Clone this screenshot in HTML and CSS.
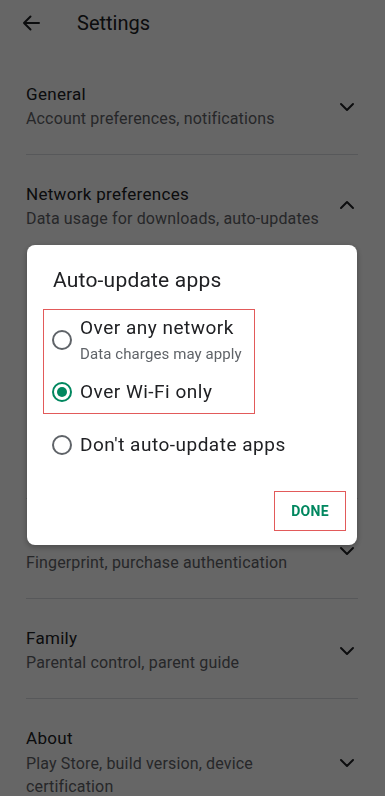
FILE: index.html
```html
<!DOCTYPE html>
<html lang="en">
<head>
<meta charset="utf-8">
<title>Settings</title>
<link rel="stylesheet" href="styles.css">
</head>
<body>
<div class="page">
  <header class="topbar">
    <svg class="back" width="20" height="20" viewBox="0 0 20 20"><path d="M18 10H3M9.5 3.5L3 10l6.5 6.5" fill="none" stroke="#202124" stroke-width="2" stroke-linecap="round" stroke-linejoin="round"/></svg>
    <h1 class="title">Settings</h1>
  </header>
  <div class="rows">
    <div class="row">
      <div class="text"><div class="rt">General</div><div class="rs">Account preferences, notifications</div></div>
      <svg class="chev" width="16" height="10" viewBox="0 0 16 10"><path d="M2 2l6 6 6-6" fill="none" stroke="#202124" stroke-width="2" stroke-linecap="round" stroke-linejoin="round"/></svg>
    </div>
    <div class="row expanded">
      <div class="head">
        <div class="text"><div class="rt">Network preferences</div><div class="rs">Data usage for downloads, auto-updates</div></div>
        <svg class="chev up" width="16" height="10" viewBox="0 0 16 10"><path d="M2 8l6-6 6 6" fill="none" stroke="#202124" stroke-width="2" stroke-linecap="round" stroke-linejoin="round"/></svg>
      </div>
      <div class="sub"><div class="rt">App download preference</div><div class="rs">Over any network</div></div>
      <div class="sub"><div class="rt">Auto-update apps</div><div class="rs">Over Wi-Fi only</div></div>
      <div class="sub"><div class="rt">Auto-play videos</div><div class="rs">Over Wi-Fi only</div></div>
    </div>
    <div class="row">
      <div class="text"><div class="rt covered">Authentication</div><div class="rs">Fingerprint, purchase authentication</div></div>
      <svg class="chev" width="16" height="10" viewBox="0 0 16 10"><path d="M2 2l6 6 6-6" fill="none" stroke="#202124" stroke-width="2" stroke-linecap="round" stroke-linejoin="round"/></svg>
    </div>
    <div class="row">
      <div class="text"><div class="rt">Family</div><div class="rs">Parental control, parent guide</div></div>
      <svg class="chev" width="16" height="10" viewBox="0 0 16 10"><path d="M2 2l6 6 6-6" fill="none" stroke="#202124" stroke-width="2" stroke-linecap="round" stroke-linejoin="round"/></svg>
    </div>
    <div class="row last">
      <div class="text"><div class="rt">About</div><div class="rs two">Play Store, build version, device certification</div></div>
      <svg class="chev" width="16" height="10" viewBox="0 0 16 10"><path d="M2 2l6 6 6-6" fill="none" stroke="#202124" stroke-width="2" stroke-linecap="round" stroke-linejoin="round"/></svg>
    </div>
  </div>
</div>
<div class="scrim"></div>
<div class="dialog">
  <div class="dtitle">Auto-update apps</div>
  <div class="hl">
    <div class="opt first">
      <span class="radio"></span>
      <div class="otext"><div class="ot">Over any network</div><div class="os">Data charges may apply</div></div>
    </div>
    <div class="opt second">
      <span class="radio on"></span>
      <div class="otext"><div class="ot">Over Wi-Fi only</div></div>
    </div>
  </div>
  <div class="opt third">
    <span class="radio"></span>
    <div class="otext"><div class="ot">Don't auto-update apps</div></div>
  </div>
  <div class="actions"><span class="done">DONE</span></div>
</div>
</body>
</html>
```
FILE: styles.css
```css
html, body {
  margin: 0;
  padding: 0;
  background: #ffffff;
  font-family: Roboto, "Noto Sans", Arial, sans-serif;
  color: #202124;
}
.page {
  width: 385px;
  height: 796px;
  overflow: hidden;
}
.topbar {
  height: 46px;
  display: flex;
  align-items: center;
  padding-left: 21px;
  margin-bottom: 9px;
}
.back { display: block; }
.title {
  margin: 0 0 0 36px;
  font-size: 20px;
  font-weight: 400;
  color: #202124;
  line-height: 28px;
}
.rows {
  margin: 0 27px 0 26px;
}
.row {
  display: flex;
  align-items: center;
  justify-content: space-between;
  padding: 28px 0 24px;
  border-bottom: 1px solid #dadce0;
}
.row.expanded {
  display: block;
  padding-bottom: 0;
  height: 315px;
}
.row.expanded .head {
  display: flex;
  align-items: center;
  justify-content: space-between;
}
.sub {
  padding: 20px 0 0;
  visibility: hidden;
}
.row.last { border-bottom: none; }
.rt {
  font-size: 17px;
  line-height: 22px;
  letter-spacing: 0.3px;
  color: #202124;
}
.rt.covered { visibility: hidden; }
.rs {
  margin-top: 3px;
  font-size: 16px;
  line-height: 22px;
  letter-spacing: 0.15px;
  color: #5f6368;
}
.rs.two { width: 290px; line-height: 23px; }
.chev {
  display: block;
  margin-right: 3px;
  flex-shrink: 0;
}
.chev.up { margin-top: -4px; }
.scrim {
  position: fixed;
  inset: 0;
  background: rgba(0, 0, 0, 0.6);
}
.dialog {
  position: fixed;
  left: 27px;
  top: 245px;
  width: 330px;
  height: 300px;
  box-sizing: border-box;
  background: #ffffff;
  border-radius: 8px;
  box-shadow: 0 2px 6px rgba(0,0,0,0.3);
  padding: 21px 0 0;
}
.dtitle {
  font-size: 21px;
  line-height: 28px;
  letter-spacing: 0.2px;
  padding-left: 26px;
  color: #202124;
  font-weight: 400;
}
.hl {
  margin: 15px 0 0 16px;
  width: 212px;
  height: 105px;
  box-sizing: border-box;
  border: 1px solid #e25a5a;
  padding: 6px 0 0 8px;
}
.opt {
  display: flex;
  align-items: center;
}
.opt.second { margin-top: 16px; }
.opt.third { margin: 19px 0 0 25px; }
.radio {
  width: 20px;
  height: 20px;
  box-sizing: border-box;
  border: 2px solid #5f6368;
  border-radius: 50%;
  flex-shrink: 0;
  margin-right: 8px;
  display: flex;
  align-items: center;
  justify-content: center;
}
.radio.on { border-color: #01875f; }
.radio.on::after {
  content: "";
  width: 10px;
  height: 10px;
  border-radius: 50%;
  background: #01875f;
}
.ot {
  font-size: 19px;
  line-height: 24px;
  letter-spacing: 0.5px;
  color: #202124;
}
.os {
  margin-top: 4px;
  font-size: 15px;
  line-height: 20px;
  letter-spacing: 0.1px;
  color: #5f6368;
}
.actions {
  display: flex;
  justify-content: flex-end;
  margin: 34px 11px 0 0;
}
.done {
  width: 72px;
  height: 40px;
  box-sizing: border-box;
  border: 1px solid #e25a5a;
  display: flex;
  align-items: center;
  justify-content: center;
  font-size: 14px;
  font-weight: 700;
  color: #01875f;
  letter-spacing: 0.3px;
}
```
